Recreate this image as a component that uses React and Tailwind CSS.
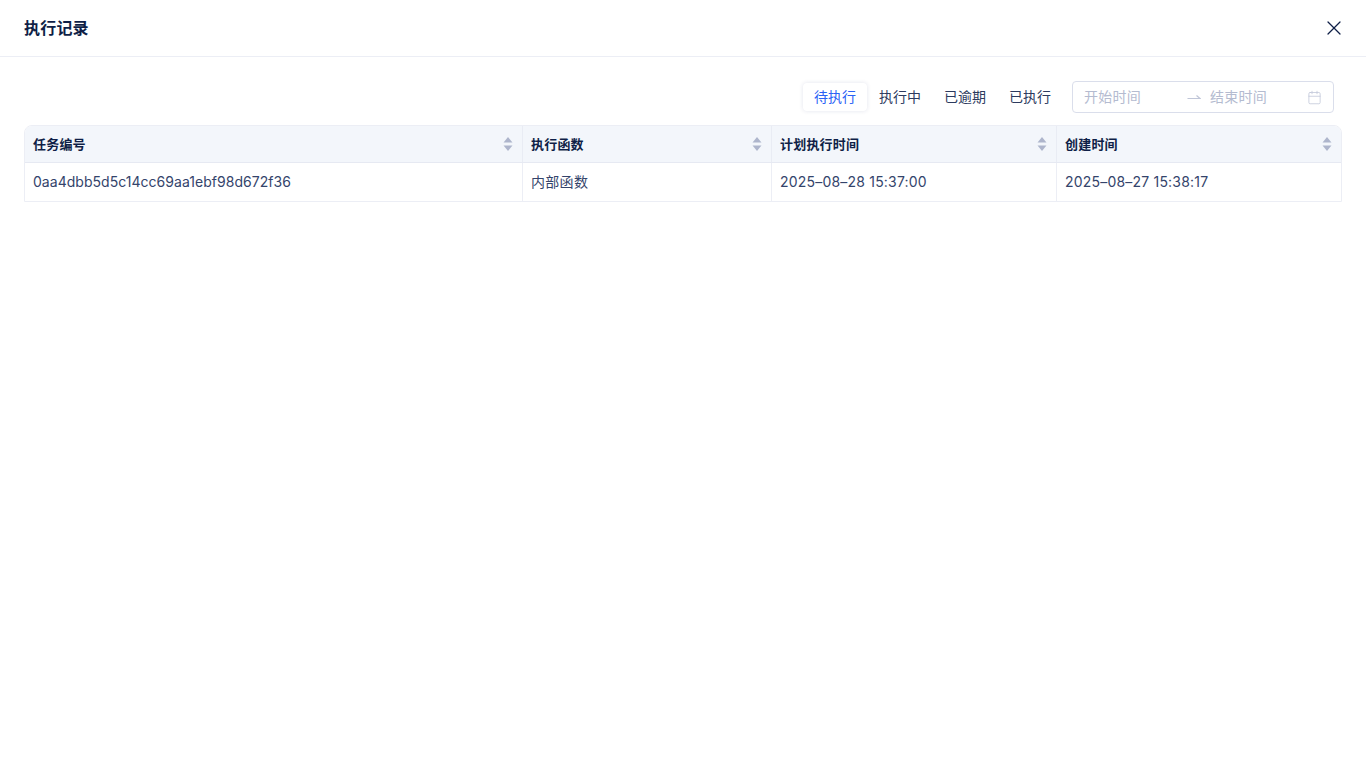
import { X, Calendar } from 'lucide-react';

const fontStack = "font-['Inter','Noto_Sans_CJK_SC',sans-serif]";

const columns = [
  { title: '任务编号', width: 'w-[497px]', cell: 'tracking-[0.03px]' },
  { title: '执行函数', width: 'w-[249px]', cell: 'tracking-[0.3px]' },
  { title: '计划执行时间', width: 'w-[285px]', cell: 'tracking-[0.2px]' },
  { title: '创建时间', width: 'flex-1', cell: 'tracking-[0.2px]' },
];

const row = ['0aa4dbb5d5c14cc69aa1ebf98d672f36', '内部函数', '2025–08–28 15:37:00', '2025–08–27 15:38:17'];

const tabs = ['待执行', '执行中', '已逾期', '已执行'];

function SortIcon() {
  return (
    <svg width="10" height="16" viewBox="0 0 10 16" fill="#aeb5cc">
      <path d="M5 1l4.5 5.5h-9z" />
      <path d="M5 15L.5 9.5h9z" />
    </svg>
  );
}

function RangeArrow() {
  return (
    <svg width="14" height="14" viewBox="0 0 14 14" fill="none" stroke="#c0c6d8" strokeWidth="1.2">
      <path d="M.5 8.5h12.5L9.5 5.5" />
    </svg>
  );
}

export default function App() {
  return (
    <div className={`${fontStack} min-h-screen bg-white text-[#0f1f47]`}>
      {/* header */}
      <div className="flex h-[57px] items-center justify-between border-b border-[#eceef5] pl-6 pr-5">
        <h1 className="text-base font-semibold tracking-[0.2px]">执行记录</h1>
        <X size={24} strokeWidth={1.25} />
      </div>

      <div className="px-6 pt-6">
        {/* filters */}
        <div className="flex h-8 items-center justify-end pr-2">
          <div className="flex items-center gap-px">
            {tabs.map((tab, i) => (
              <div
                key={tab}
                className={`flex h-7 w-[64px] items-center justify-center rounded text-sm ${
                  i === 0 ? 'bg-white text-[#2a62f5] shadow-[0_0_4px_rgba(40,60,120,0.14)]' : 'text-[#2c3a5e]'
                }`}
              >
                {tab}
              </div>
            ))}
          </div>
          <div className="ml-[10px] flex h-8 w-[262px] items-center rounded border border-[#dadeeb] pl-[11px] pr-[11px] text-sm tracking-[0.25px] text-[#b4bbd0]">
            <span className="w-[103px]">开始时间</span>
            <RangeArrow />
            <span className="ml-[9px] flex-1">结束时间</span>
            <Calendar size={15} strokeWidth={1.25} className="text-[#c0c6d8]" />
          </div>
        </div>

        {/* table */}
        <div className="mt-3 overflow-hidden rounded-t-lg border border-[#eceef5]">
          <div className="flex h-[37px] border-b border-[#e6e9f2] bg-[#f3f6fb]">
            {columns.map((col, i) => (
              <div
                key={col.title}
                className={`${col.width} flex items-center justify-between pl-2 pr-[9px] ${i > 0 ? 'border-l border-[#e9ecf4]' : ''}`}
              >
                <span className="pt-px text-[13px] font-semibold tracking-[0.2px]">{col.title}</span>
                <SortIcon />
              </div>
            ))}
          </div>
          <div className="flex h-[38px]">
            {columns.map((col, i) => (
              <div
                key={col.title}
                className={`${col.width} ${col.cell} flex items-center pl-2 text-sm text-[#34446b] ${i > 0 ? 'border-l border-[#eceef5]' : ''}`}
              >
                {row[i]}
              </div>
            ))}
          </div>
        </div>
      </div>
    </div>
  );
}
